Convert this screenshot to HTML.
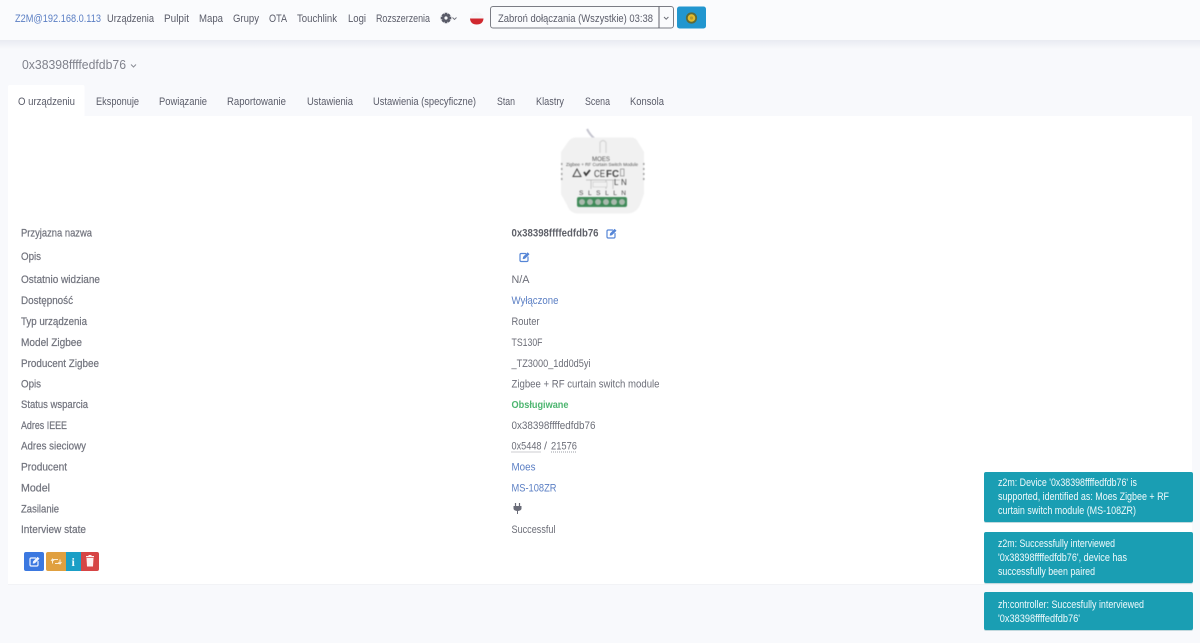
<!DOCTYPE html>
<html lang="pl">
<head>
<meta charset="utf-8">
<title>Zigbee2MQTT</title>
<style>
html,body{margin:0;padding:0;width:1200px;height:643px;overflow:hidden;background:#f8f9fc}
svg{display:block;filter:blur(.25px)}
text{font-family:"Liberation Sans","DejaVu Sans",sans-serif;font-size:11px;fill:#60626e}
.n{fill:#5a5c69}
.l{fill:#72747e;stroke:#72747e;stroke-width:.22px;font-size:10.8px}
.v{fill:#6c6e78;font-size:10.8px}
.a{fill:#5b7fc4}
.t{fill:#f0fafc;font-size:10.6px}
#img{filter:blur(.45px)}
</style>
</head>
<body>
<svg width="1200" height="643" viewBox="0 0 1200 643" xmlns="http://www.w3.org/2000/svg">
<defs>
<linearGradient id="sh" x1="0" y1="0" x2="0" y2="1"><stop offset="0" stop-color="#e9ebf2"/><stop offset="1" stop-color="#f8f9fc"/></linearGradient>
<g id="edit" fill="none" stroke-linecap="round" stroke-linejoin="round">
<path d="M6.500 1.500H2.200Q1 1.500 1 2.700V8.300Q1 9.500 2.200 9.500H7.800Q9 9.500 9 8.300V5" stroke-width="1.200"/>
<path d="M4 6.800L4.400 4.900L8.600 .7L10.100 2.200L5.900 6.400Z" fill="currentColor" stroke-width=".6"/>
</g>
</defs>
<rect width="1200" height="643" fill="#f8f9fc"/>
<rect y="40" width="1200" height="9" fill="url(#sh)"/>
<rect width="1200" height="40" fill="#fafbfd"/>

<!-- navbar -->
<text x="15" y="22" class="a" textLength="86" lengthAdjust="spacingAndGlyphs">Z2M@192.168.0.113</text>
<text x="107" y="22" class="n" textLength="47" lengthAdjust="spacingAndGlyphs">Urządzenia</text>
<text x="164" y="22" class="n" textLength="25" lengthAdjust="spacingAndGlyphs">Pulpit</text>
<text x="199" y="22" class="n" textLength="24" lengthAdjust="spacingAndGlyphs">Mapa</text>
<text x="233" y="22" class="n" textLength="26" lengthAdjust="spacingAndGlyphs">Grupy</text>
<text x="269" y="22" class="n" textLength="18" lengthAdjust="spacingAndGlyphs">OTA</text>
<text x="297" y="22" class="n" textLength="40" lengthAdjust="spacingAndGlyphs">Touchlink</text>
<text x="348" y="22" class="n" textLength="18" lengthAdjust="spacingAndGlyphs">Logi</text>
<text x="376" y="22" class="n" textLength="54" lengthAdjust="spacingAndGlyphs">Rozszerzenia</text>
<!-- gear -->
<g transform="translate(446 18)" fill="#5a5c69">
<circle r="4"/>
<path d="M-1.400-5.300H1.400V5.300H-1.400ZM-5.300-1.400H5.300V1.400H-5.300ZM-4.600-2.600L-2.600-4.600L4.600 2.600L2.600 4.600ZM4.600-2.600L2.600-4.600L-4.600 2.600L-2.600 4.600Z"/>
<circle r="1.600" fill="#fafbfd"/>
</g>
<path d="M452.500 17.500L454.500 19.500L456.500 17.500" fill="none" stroke="#70727c" stroke-width=".9"/>
<!-- flag -->
<path d="M470 18.500H483.500Q483 24.500 476.700 24.500Q470.500 24.500 470 18.500Z" fill="#d0282f"/>
<path d="M470 18.500Q470.500 12.500 476.700 12Q483 12.500 483.500 18.500Z" fill="#f6f6f7"/>
<!-- permit join -->
<rect x="490.500" y="6.500" width="183" height="21.500" rx="2.500" fill="#fafbfd" stroke="#7b7d85"/>
<line x1="659" y1="6.500" x2="659" y2="28" stroke="#60626a"/>
<text x="498" y="22" class="n" textLength="155" lengthAdjust="spacingAndGlyphs">Zabroń dołączania (Wszystkie) 03:38</text>
<path d="M664 17L666.200 19.200L668.400 17" fill="none" stroke="#6a6c75" stroke-width="1"/>
<rect x="677" y="6.500" width="29" height="22" rx="2.500" fill="#2196cf"/>
<circle cx="691.500" cy="18" r="5.600" fill="#5b6a3a"/>
<circle cx="691.500" cy="18" r="3.800" fill="#e2bb2c"/>
<circle cx="691.500" cy="18" r="1.600" fill="#b79a2c"/>

<!-- title -->
<text x="22" y="69" style="font-size:13px;fill:#80828c" textLength="104" lengthAdjust="spacingAndGlyphs">0x38398ffffedfdb76</text>
<path d="M131 64.500L133.500 67L136 64.500" fill="none" stroke="#8a8c95" stroke-width="1"/>

<!-- tabs -->
<rect x="8" y="85" width="76.500" height="32" rx="2" fill="#fff"/>
<text x="18" y="105" class="n" textLength="57" lengthAdjust="spacingAndGlyphs">O urządzeniu</text>
<text x="96" y="105" class="n" textLength="43" lengthAdjust="spacingAndGlyphs">Eksponuje</text>
<text x="159" y="105" class="n" textLength="48" lengthAdjust="spacingAndGlyphs">Powiązanie</text>
<text x="227" y="105" class="n" textLength="59" lengthAdjust="spacingAndGlyphs">Raportowanie</text>
<text x="307" y="105" class="n" textLength="46" lengthAdjust="spacingAndGlyphs">Ustawienia</text>
<text x="373" y="105" class="n" textLength="103" lengthAdjust="spacingAndGlyphs">Ustawienia (specyficzne)</text>
<text x="497" y="105" class="n" textLength="18" lengthAdjust="spacingAndGlyphs">Stan</text>
<text x="536" y="105" class="n" textLength="28" lengthAdjust="spacingAndGlyphs">Klastry</text>
<text x="585" y="105" class="n" textLength="25" lengthAdjust="spacingAndGlyphs">Scena</text>
<text x="630" y="105" class="n" textLength="34" lengthAdjust="spacingAndGlyphs">Konsola</text>

<!-- card -->
<rect x="8" y="116" width="1184" height="468" fill="#fff"/>
<rect x="8" y="584" width="1184" height="1" fill="#f2f3f6"/>

<!-- device image -->
<g id="img">
<path d="M587 129Q590 135 595 139" fill="none" stroke="#c4c4ce" stroke-width="2"/>
<path d="M576 137.500H631Q636 137.500 638 142L644 152V194L640 205Q636 213.500 628 213.500H578Q570 213.500 567 205L561 194V152L568 142Q571 137.500 576 137.500Z" fill="#f1f1f1"/>
<path d="M600 153V142.500Q603 138.500 606 142.500V153" fill="none" stroke="#d6d6d6" stroke-width="1.200"/>
<text x="592" y="161" style="font-size:6.500px;fill:#555" textLength="18" lengthAdjust="spacingAndGlyphs">MOES</text>
<text x="566" y="166" style="font-size:4.500px;fill:#555" textLength="72" lengthAdjust="spacingAndGlyphs">Zigbee + RF Curtain Switch Module</text>
<path d="M577 169L573 176.500H581Z" fill="none" stroke="#444" stroke-width="1"/>
<path d="M584 172L586 175L590 170" fill="none" stroke="#333" stroke-width="1.700"/>
<text x="594" y="177" style="font-size:10px;fill:#444" textLength="11" lengthAdjust="spacingAndGlyphs">CE</text>
<text x="606" y="177" style="font-size:10px;font-weight:bold;fill:#444" textLength="13" lengthAdjust="spacingAndGlyphs">FC</text>
<rect x="620.500" y="169" width="3.500" height="7" fill="none" stroke="#888" stroke-width=".7"/>
<path d="M586 180H620M591 180V189M606 180V189M613 180V189" fill="none" stroke="#b4b4b4" stroke-width=".7"/>
<rect x="593" y="182" width="14" height="5" fill="#f1f1f1" stroke="#c0c0c0" stroke-width=".5"/>
<text x="614" y="185" style="font-size:8px;fill:#444">L</text>
<text x="621" y="185" style="font-size:8px;fill:#444">N</text>
<text x="579" y="195" style="font-size:6.500px;fill:#444" textLength="47" lengthAdjust="spacing">S L S L L N</text>
<rect x="577" y="197" width="50" height="10" rx="2" fill="#3f8a58"/>
<g fill="#a9baad"><circle cx="582" cy="202" r="3"/><circle cx="590" cy="202" r="3"/><circle cx="598" cy="202" r="3"/><circle cx="606" cy="202" r="3"/><circle cx="614" cy="202" r="3"/><circle cx="622" cy="202" r="3"/></g>
<g fill="#a0a0a0"><rect x="561" y="163" width="1.500" height="2"/><rect x="561" y="168" width="1.500" height="2"/><rect x="561" y="173" width="1.500" height="2"/><rect x="561" y="178" width="1.500" height="2"/><rect x="643" y="163" width="1.500" height="2"/><rect x="643" y="168" width="1.500" height="2"/><rect x="643" y="173" width="1.500" height="2"/><rect x="643" y="178" width="1.500" height="2"/></g>
</g>

<!-- labels -->
<text x="21" y="236.500" class="l" textLength="71" lengthAdjust="spacingAndGlyphs">Przyjazna nazwa</text>
<text x="21" y="260" class="l" textLength="20" lengthAdjust="spacingAndGlyphs">Opis</text>
<text x="21" y="283" class="l" textLength="79" lengthAdjust="spacingAndGlyphs">Ostatnio widziane</text>
<text x="21" y="304" class="l" textLength="52" lengthAdjust="spacingAndGlyphs">Dostępność</text>
<text x="21" y="325" class="l" textLength="66" lengthAdjust="spacingAndGlyphs">Typ urządzenia</text>
<text x="21" y="346" class="l" textLength="61" lengthAdjust="spacingAndGlyphs">Model Zigbee</text>
<text x="21" y="367" class="l" textLength="78" lengthAdjust="spacingAndGlyphs">Producent Zigbee</text>
<text x="21" y="387.500" class="l" textLength="20" lengthAdjust="spacingAndGlyphs">Opis</text>
<text x="21" y="408" class="l" textLength="67" lengthAdjust="spacingAndGlyphs">Status wsparcia</text>
<text x="21" y="429" class="l" textLength="46" lengthAdjust="spacingAndGlyphs">Adres IEEE</text>
<text x="21" y="449.500" class="l" textLength="65" lengthAdjust="spacingAndGlyphs">Adres sieciowy</text>
<text x="21" y="470.500" class="l" textLength="46" lengthAdjust="spacingAndGlyphs">Producent</text>
<text x="21" y="491.500" class="l" textLength="29" lengthAdjust="spacingAndGlyphs">Model</text>
<text x="21" y="512.500" class="l" textLength="38" lengthAdjust="spacingAndGlyphs">Zasilanie</text>
<text x="21" y="533" class="l" textLength="65" lengthAdjust="spacingAndGlyphs">Interview state</text>

<!-- values -->
<text x="511.500" y="236.500" style="font-weight:bold;fill:#5f6169;font-size:11px" textLength="87" lengthAdjust="spacingAndGlyphs">0x38398ffffedfdb76</text>
<use href="#edit" x="606" y="228.500" stroke="#5585d6" color="#5585d6"/>
<use href="#edit" x="519" y="252" stroke="#5585d6" color="#5585d6"/>
<text x="511.500" y="283" class="v" textLength="18" lengthAdjust="spacingAndGlyphs">N/A</text>
<text x="511.500" y="304" class="a" textLength="47" lengthAdjust="spacingAndGlyphs">Wyłączone</text>
<text x="511.500" y="325" class="v" textLength="28" lengthAdjust="spacingAndGlyphs">Router</text>
<text x="511.500" y="346" class="v" textLength="31" lengthAdjust="spacingAndGlyphs">TS130F</text>
<text x="511.500" y="367" class="v" textLength="79" lengthAdjust="spacingAndGlyphs">_TZ3000_1dd0d5yi</text>
<text x="511.500" y="387.500" class="v" textLength="148" lengthAdjust="spacingAndGlyphs">Zigbee + RF curtain switch module</text>
<text x="511.500" y="408" style="font-weight:bold;fill:#4cb56f;font-size:10.500px" textLength="57" lengthAdjust="spacingAndGlyphs">Obsługiwane</text>
<text x="511.500" y="429" class="v" textLength="84" lengthAdjust="spacingAndGlyphs">0x38398ffffedfdb76</text>
<text x="511.500" y="449.500" class="v" textLength="30" lengthAdjust="spacingAndGlyphs">0x5448</text>
<text x="544" y="449.500" class="v">/</text>
<text x="551" y="449.500" class="v" textLength="26" lengthAdjust="spacingAndGlyphs">21576</text>
<path d="M511.500 452H541.500M551 452H577" stroke="#9a9ca4" stroke-width="1" stroke-dasharray="1 1"/>
<text x="511.500" y="470.500" class="a" textLength="24" lengthAdjust="spacingAndGlyphs">Moes</text>
<text x="511.500" y="491.500" class="a" textLength="45" lengthAdjust="spacingAndGlyphs">MS-108ZR</text>
<path d="M515.500 503V506M519.500 503V506" stroke="#6a6c78" stroke-width="1.200"/>
<path d="M513.500 506H521.500V508.500Q521.500 510.500 518 511V514H517V511Q513.500 510.500 513.500 508.500Z" fill="#6a6c78"/>
<text x="511.500" y="533" class="v" textLength="44" lengthAdjust="spacingAndGlyphs">Successful</text>

<!-- action buttons -->
<rect x="24" y="552" width="20" height="19" rx="2" fill="#3b78e0"/>
<use href="#edit" x="29" y="556.500" stroke="#f2f6ff" color="#f2f6ff"/>
<path d="M46 554Q46 552 48 552H66V571H48Q46 571 46 569Z" fill="#e0a040"/>
<path d="M52.500 563.500V559.500H58M60 559.500V563.500H55M51 561L52.500 559L54 561M58.500 562L60 564L61.500 562" fill="none" stroke="#fbeed8" stroke-width="1"/>
<rect x="66" y="552" width="15" height="19" fill="#1b9fc6"/>
<text x="71.500" y="566" style="font-size:12px;font-weight:bold;fill:#f2fbfe;font-family:'Liberation Serif',serif">i</text>
<path d="M81 552H97Q99 552 99 554V569Q99 571 97 571H81Z" fill="#d64545"/>
<path d="M86.500 558H93.500L93 566.500H87ZM86 556H94V557.200H86ZM88.500 555H91.500V556H88.500Z" fill="#fdf0f0"/>

<!-- toasts -->
<rect x="984" y="473" width="209" height="50" rx="2" fill="#c2d9de"/>
<rect x="984" y="533" width="209" height="51" rx="2" fill="#c2d9de"/>
<rect x="984" y="593" width="209" height="38" rx="2" fill="#c2d9de"/>
<rect x="984" y="472" width="209" height="50" rx="2" fill="#1a9eb3"/>
<rect x="984" y="532" width="209" height="51" rx="2" fill="#1a9eb3"/>
<rect x="984" y="592" width="209" height="38" rx="2" fill="#1a9eb3"/>
<text x="998" y="486" class="t" textLength="139" lengthAdjust="spacingAndGlyphs">z2m: Device '0x38398ffffedfdb76' is</text>
<text x="998" y="500" class="t" textLength="171" lengthAdjust="spacingAndGlyphs">supported, identified as: Moes Zigbee + RF</text>
<text x="998" y="514" class="t" textLength="138" lengthAdjust="spacingAndGlyphs">curtain switch module (MS-108ZR)</text>
<text x="998" y="547" class="t" textLength="117" lengthAdjust="spacingAndGlyphs">z2m: Successfully interviewed</text>
<text x="998" y="561" class="t" textLength="129" lengthAdjust="spacingAndGlyphs">'0x38398ffffedfdb76', device has</text>
<text x="998" y="575" class="t" textLength="97" lengthAdjust="spacingAndGlyphs">successfully been paired</text>
<text x="998" y="608" class="t" textLength="146" lengthAdjust="spacingAndGlyphs">zh:controller: Succesfully interviewed</text>
<text x="998" y="622" class="t" textLength="82" lengthAdjust="spacingAndGlyphs">'0x38398ffffedfdb76'</text>
</svg>
</body>
</html>
